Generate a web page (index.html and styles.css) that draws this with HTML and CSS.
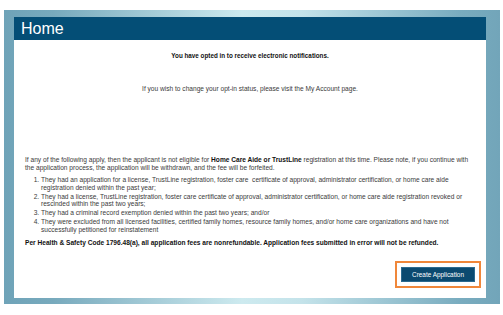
FILE: index.html
```html
<!DOCTYPE html>
<html lang="en">
<head>
  <meta charset="UTF-8">
  <title>Home</title>
  <link rel="stylesheet" href="styles.css">
</head>
<body>
  <div class="frame">
    <div class="panel">
      <h1 class="panel-title">Home</h1>
      <div class="panel-body">
        <p class="notice">You have opted in to receive electronic notifications.</p>
        <p class="optin">If you wish to change your opt-in status, please visit the My Account page.</p>

        <p class="intro">If any of the following apply, then the applicant is not eligible for <b>Home Care Aide or TrustLine</b> registration at this time. Please note, if you continue with the application process, the application will be withdrawn, and the fee will be forfeited.</p>
        <ol class="reasons">
          <li>They had an application for a license, TrustLine registration, foster care&nbsp; certificate of approval, administrator certification, or home care aide registration denied within the past year;</li>
          <li>They had a license, TrustLine registration, foster care certificate of approval, administrator certification, or home care aide registration revoked or rescinded within the past two years;</li>
          <li>They had a criminal record exemption denied within the past two years; and/or</li>
          <li>They were excluded from all licensed facilities, certified family homes, resource family homes, and/or home care organizations and have not successfully petitioned for reinstatement</li>
        </ol>
        <p class="fees">Per Health &amp; Safety Code 1796.48(a), all application fees are nonrefundable. Application fees submitted in error will not be refunded.</p>

        <div class="actions">
          <button type="button" class="btn-create">Create Application</button>
        </div>
      </div>
    </div>
  </div>
</body>
</html>
```

FILE: styles.css
```css
* {
  box-sizing: border-box;
}
body {
  margin: 0;
  background: #fff;
  font-family: 'Liberation Sans', Arial, sans-serif;
  color: #3a3a3a;
}
.frame {
  margin: 10px 0 0 4px;
  width: 496px;
  height: 294px;
  padding: 7px 14px 6px 10px;
  background: linear-gradient(to right, #6fa3b8 0%, #78aabd 10%, #cdeaef 48%, #c4e3ea 60%, #79acbf 92%, #72a5b9 100%);
}
.panel {
  background: #fff;
  height: 100%;
  display: flex;
  flex-direction: column;
}
.panel-title {
  margin: 0;
  height: 23px;
  padding-left: 7px;
  background: #044e76;
  color: #fff;
  font-size: 16px;
  font-weight: normal;
  line-height: 23px;
}
.panel-body {
  padding: 0 11px 0 11px;
  font-size: 6.6px;
}
p {
  margin: 0;
}
.notice {
  margin-top: 12px;
  text-align: center;
  font-size: 6.3px;
  font-weight: bold;
  color: #111;
  line-height: 8px;
}
.optin {
  margin-top: 25px;
  text-align: center;
  line-height: 8px;
}
.intro {
  margin-top: 63px;
  line-height: 7.5px;
}
.intro b {
  color: #111;
}
.reasons {
  margin: 5px 0 0;
  padding-left: 16px;
  line-height: 7.5px;
}
.reasons li {
  margin-bottom: 1.5px;
}
.fees {
  margin-top: 6px;
  font-weight: bold;
  color: #111;
  line-height: 8px;
}
.actions {
  display: flex;
  justify-content: flex-end;
  margin-top: 20px;
}
.btn-create {
  width: 74px;
  height: 15px;
  padding: 0;
  border: 1px solid #2c6a8f;
  background: #0b4a70;
  color: #fff;
  font-family: 'Liberation Sans', Arial, sans-serif;
  font-size: 6.4px;
  outline: 2px solid #f0873a;
  outline-offset: 4px;
}
```
